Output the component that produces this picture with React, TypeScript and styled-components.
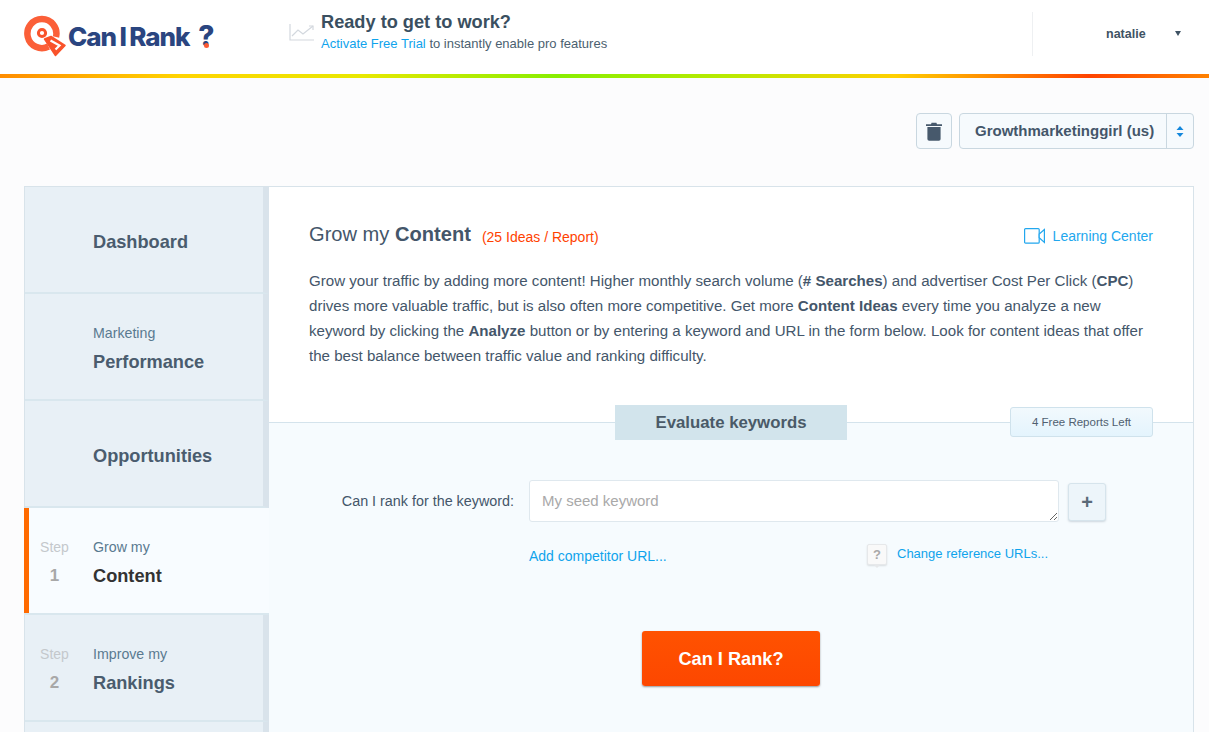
import React from "react";
import styled, { createGlobalStyle } from "styled-components";

const Global = createGlobalStyle`
  html, body { margin: 0; padding: 0; height: 732px; overflow: hidden; background: #fcfcfd; }
  body { font-family: "Liberation Sans", Arial, sans-serif; color: #44566a; }
  * { box-sizing: border-box; }
`;

const Page = styled.div`
  width: 1209px;
  height: 732px;
  overflow: hidden;
`;

const Header = styled.header`
  height: 78px;
  background: #fff;
  border-bottom: 4px solid transparent;
  border-image: linear-gradient(90deg, #ff8c00 0%, #ffd400 15%, #e8e800 30%, #88ee00 46%, #b8ea00 60%, #ffd000 74%, #ff4300 90%, #ff8200 100%) 1;
  display: flex;
  align-items: flex-start;
`;

const Logo = styled.div`
  width: 289px;
  padding: 15px 0 0 24px;
  display: flex;
  align-items: flex-start;
`;

const LogoText = styled.span`
  font-family: Inter, "Liberation Sans", sans-serif;
  font-weight: 800;
  font-size: 26px;
  letter-spacing: -1.1px;
  word-spacing: -1px;
  line-height: 40px;
  color: #2a4580;
  white-space: nowrap;
  margin: 2px 0 0 1px;
`;

const LogoMark = styled.span`
  position: relative;
  display: inline-block;
  font-size: 28px;
  line-height: 38px;
  vertical-align: top;
  margin-left: 9px;
  &::after {
    content: "";
    position: absolute;
    left: 5.5px;
    bottom: 7px;
    width: 5px;
    height: 5px;
    border-radius: 50%;
    background: #fb5a33;
  }
`;

const Promo = styled.div`
  flex: 1;
  display: flex;
  padding-top: 12px;
`;

const PromoIcon = styled.div`
  width: 32px;
  padding-top: 11px;
`;

const PromoTitle = styled.div`
  font-size: 18.2px;
  line-height: 20px;
  font-weight: 700;
  color: #3a4f60;
`;

const PromoLine = styled.div`
  margin-top: 4px;
  font-size: 13px;
  line-height: 15px;
  color: #4b5f70;
`;

const Link = styled.a`
  color: #0fa3ec;
`;

const UserArea = styled.div`
  width: 177px;
  margin-top: 12px;
  height: 44px;
  border-left: 1px solid #eef0f2;
  display: flex;
  align-items: center;
  padding-left: 73px;
  font-size: 12.5px;
  font-weight: 700;
  color: #3f5364;
`;

const Caret = styled.span`
  margin-left: 29px;
  width: 0;
  height: 0;
  border-left: 3.5px solid transparent;
  border-right: 3.5px solid transparent;
  border-top: 5px solid #3f5364;
  margin-top: -1px;
`;

const Toolbar = styled.div`
  height: 108px;
  padding: 35px 15px 0 0;
  display: flex;
  justify-content: flex-end;
  gap: 7px;
`;

const IconButton = styled.div`
  width: 36px;
  height: 36px;
  border: 1px solid #c9d7e0;
  border-radius: 4px;
  background: #f6fafd;
  display: flex;
  align-items: center;
  justify-content: center;
`;

const Select = styled.div`
  width: 235px;
  height: 36px;
  border: 1px solid #c9d7e0;
  border-radius: 4px;
  background: #f6fafd;
  display: flex;
`;

const SelectLabel = styled.div`
  flex: 1;
  padding-left: 15px;
  line-height: 34px;
  font-size: 15px;
  font-weight: 700;
  color: #44566a;
  white-space: nowrap;
`;

const SelectArrows = styled.div`
  width: 27px;
  border-left: 1px solid #c9d7e0;
  display: flex;
  align-items: center;
  justify-content: center;
`;

const Panel = styled.div`
  margin: 0 15px 0 24px;
  height: 560px;
  border: 1px solid #d8e3ea;
  background: #fff;
  display: flex;
`;

const Sidebar = styled.nav`
  width: 244px;
  flex: none;
`;

const NavItem = styled.div<{ $active?: boolean }>`
  height: 107px;
  display: flex;
  align-items: center;
  background: ${p => (p.$active ? "#f8fcff" : "#e8f0f6")};
  border-bottom: 2px solid #d9e7ee;
  border-right: ${p => (p.$active ? "0" : "6px solid #d9e3eb")};
  box-shadow: ${p => (p.$active ? "inset 5px 0 0 #ff6a00" : "none")};
  margin-left: ${p => (p.$active ? "-1px" : "0")};
  padding: 2px 0 0 ${p => (p.$active ? "16px" : "15px")};
`;

const StepCol = styled.div`
  width: 53px;
  text-align: center;
  padding-right: 24px;
  flex: none;
`;

const StepLabel = styled.div`
  font-size: 14px;
  line-height: 20px;
  color: #c4c8cc;
`;

const StepNum = styled.div`
  font-size: 17px;
  line-height: 20px;
  font-weight: 700;
  color: #a8a8a8;
  margin-top: 9px;
`;

const NavText = styled.div``;

const NavSub = styled.div`
  font-size: 14.2px;
  line-height: 20px;
  color: #5a7a90;
`;

const NavMain = styled.div<{ $active?: boolean; $top?: boolean }>`
  font-size: 18.2px;
  line-height: 20px;
  font-weight: 700;
  color: ${p => (p.$active ? "#333333" : "#4a5c6e")};
  margin-top: ${p => (p.$top ? "2px" : "9px")};
`;

const Main = styled.main`
  flex: 1;
  min-width: 0;
  display: flex;
  flex-direction: column;
`;

const Intro = styled.section`
  height: 235px;
  padding: 35px 40px 0;
`;

const TitleRow = styled.div`
  display: flex;
  align-items: center;
  height: 24px;
`;

const Title = styled.h1`
  margin: 0;
  font-size: 20.1px;
  font-weight: 400;
  color: #44566a;
  b { font-weight: 700; }
`;

const TitleNote = styled.span`
  margin-left: 11px;
  font-size: 14px;
  color: #ff4200;
  padding-top: 5px;
`;

const Learning = styled.a`
  margin-left: auto;
  display: flex;
  align-items: center;
  gap: 8px;
  font-size: 14px;
  color: #22a7ee;
  padding-top: 4px;
`;

const Body = styled.p`
  margin: 22px 0 0;
  font-size: 15.1px;
  line-height: 25px;
  color: #44566a;
  width: 844px;
`;

const Evaluate = styled.section`
  flex: 1;
  position: relative;
  border-top: 1px solid #d4e3ec;
  background: #f6fbfe;
  display: flex;
  flex-direction: column;
`;

const EvalTab = styled.div`
  position: absolute;
  top: -18px;
  left: 346px;
  width: 232px;
  height: 35px;
  background: #d2e4ec;
  text-align: center;
  line-height: 35px;
  font-size: 16.8px;
  font-weight: 700;
  color: #4a5a68;
`;

const ReportsBadge = styled.div`
  position: absolute;
  top: -16px;
  right: 40px;
  width: 143px;
  height: 30px;
  border: 1px solid #cfe2ec;
  border-radius: 3px;
  background: linear-gradient(#f2f9fd, #e4f4fd);
  text-align: center;
  line-height: 28px;
  font-size: 11.5px;
  color: #4f6070;
`;

const FormRow = styled.div`
  margin-top: 57px;
  display: flex;
  align-items: flex-start;
`;

const FieldLabel = styled.label`
  width: 245px;
  text-align: right;
  font-size: 14.35px;
  line-height: 42px;
  color: #44566a;
`;

const Keyword = styled.textarea`
  margin-left: 15px;
  width: 530px;
  height: 42px;
  border: 1px solid #dfe8ee;
  border-radius: 3px;
  background: #fff;
  padding: 11px 12px;
  font-family: "Liberation Sans", Arial, sans-serif;
  font-size: 15px;
  line-height: 17px;
  outline: none;
  &::placeholder { color: #a9a9a9; opacity: 1; }
`;

const PlusButton = styled.div`
  margin: 3px 0 0 9px;
  width: 38px;
  height: 38px;
  border: 1px solid #d6e4ec;
  border-radius: 3px;
  background: #edf5fa;
  box-shadow: 0 1px 2px rgba(90, 110, 130, 0.25);
  display: flex;
  align-items: center;
  justify-content: center;
  font-size: 20px;
  font-weight: 700;
  color: #5a6a78;
`;

const LinkRow = styled.div`
  margin-top: 22px;
  padding-left: 260px;
  display: flex;
  align-items: flex-start;
`;

const CompetitorLink = styled(Link)`
  width: 338px;
  font-size: 14px;
  line-height: 24px;
`;

const HelpBubble = styled.div`
  position: relative;
  width: 20px;
  height: 21px;
  background: #f9f9f9;
  border: 1px solid #e6e8ea;
  border-radius: 2px;
  box-shadow: 0 1px 2px rgba(0, 0, 0, 0.12);
  text-align: center;
  font-size: 13px;
  line-height: 19px;
  font-weight: 700;
  color: #a8a8a8;
  &::after {
    content: "";
    position: absolute;
    left: 6px;
    bottom: -4px;
    border-left: 3px solid transparent;
    border-right: 3px solid transparent;
    border-top: 3px solid #e6e8ea;
  }
`;

const ReferenceLink = styled(Link)`
  margin-left: 10px;
  font-size: 13px;
  line-height: 20px;
`;

const SubmitRow = styled.div`
  margin-top: 63px;
  display: flex;
  justify-content: center;
`;

const Submit = styled.button`
  width: 178px;
  height: 55px;
  border: 0;
  border-radius: 3px;
  padding: 2px 0 0;
  background: linear-gradient(#ff5200, #fd4700);
  box-shadow: 0 1px 2px rgba(70, 70, 70, 0.55);
  color: #fff;
  font-family: "Liberation Sans", Arial, sans-serif;
  font-size: 18.2px;
  font-weight: 700;
`;

const LogoIcon = () => (
  <svg width="43" height="42" viewBox="0 0 43 42" fill="none">
    <path d="M24.5 31.5 A14.5 14.5 0 1 1 32 22" stroke="#fb5f38" strokeWidth="6.5" fill="none" />
    <circle cx="18" cy="18" r="3.6" stroke="#f9532b" strokeWidth="3" fill="none" />
    <path d="M20.5 24 L27 21.5 L41 30.5 L31.5 40.5 Z" fill="#f9532b" stroke="#f9532b" strokeWidth="1.5" strokeLinejoin="round" />
    <path d="M26.5 25.5 L35.5 30.5 L31.5 34.5" stroke="#fff" strokeWidth="2.2" fill="none" />
  </svg>
);

const ChartIcon = () => (
  <svg width="26" height="18" viewBox="0 0 26 18" fill="none" stroke="#d3d8de" strokeWidth="1.2">
    <path d="M1 1 V17 H25" />
    <path d="M3 13 L9 7 L14 11 L24 3" />
    <path d="M20 3 H24 V7" />
  </svg>
);

const TrashIcon = () => (
  <svg width="16" height="19" viewBox="0 0 16 19" fill="#47596c">
    <path d="M0 2.2 H5 L5.6 .8 H10.4 L11 2.2 H16 V4 H0 Z" />
    <path d="M1.4 5 H14.6 V17 A1.8 1.8 0 0 1 12.8 18.8 H3.2 A1.8 1.8 0 0 1 1.4 17 Z" />
  </svg>
);

const ArrowsIcon = () => (
  <svg width="8" height="11" viewBox="0 0 8 11" fill="#1487dc">
    <path d="M4 0 L7.5 4 H.5 Z" />
    <path d="M.5 7 H7.5 L4 11 Z" />
  </svg>
);

const CameraIcon = () => (
  <svg width="21" height="16" viewBox="0 0 21 16" fill="none" stroke="#22a7ee" strokeWidth="1.2">
    <rect x=".6" y=".6" width="14.6" height="14.6" rx="1" />
    <path d="M20.4 1.5 L15.2 6 V9.8 L20.4 14.4 Z" fill="#fff" />
  </svg>
);

const App = () => (
  <Page>
    <Global />
    <Header>
      <Logo>
        <LogoIcon />
        <LogoText>
          Can I Rank<LogoMark>?</LogoMark>
        </LogoText>
      </Logo>
      <Promo>
        <PromoIcon>
          <ChartIcon />
        </PromoIcon>
        <div>
          <PromoTitle>Ready to get to work?</PromoTitle>
          <PromoLine>
            <Link>Activate Free Trial</Link> to instantly enable pro features
          </PromoLine>
        </div>
      </Promo>
      <UserArea>
        natalie
        <Caret />
      </UserArea>
    </Header>
    <Toolbar>
      <IconButton>
        <TrashIcon />
      </IconButton>
      <Select>
        <SelectLabel>Growthmarketinggirl (us)</SelectLabel>
        <SelectArrows>
          <ArrowsIcon />
        </SelectArrows>
      </Select>
    </Toolbar>
    <Panel>
      <Sidebar>
        <NavItem>
          <StepCol />
          <NavText>
            <NavMain $top>Dashboard</NavMain>
          </NavText>
        </NavItem>
        <NavItem>
          <StepCol />
          <NavText>
            <NavSub>Marketing</NavSub>
            <NavMain>Performance</NavMain>
          </NavText>
        </NavItem>
        <NavItem>
          <StepCol />
          <NavText>
            <NavMain $top>Opportunities</NavMain>
          </NavText>
        </NavItem>
        <NavItem $active>
          <StepCol>
            <StepLabel>Step</StepLabel>
            <StepNum>1</StepNum>
          </StepCol>
          <NavText>
            <NavSub>Grow my</NavSub>
            <NavMain $active>Content</NavMain>
          </NavText>
        </NavItem>
        <NavItem>
          <StepCol>
            <StepLabel>Step</StepLabel>
            <StepNum>2</StepNum>
          </StepCol>
          <NavText>
            <NavSub>Improve my</NavSub>
            <NavMain>Rankings</NavMain>
          </NavText>
        </NavItem>
        <NavItem />
      </Sidebar>
      <Main>
        <Intro>
          <TitleRow>
            <Title>
              Grow my <b>Content</b>
            </Title>
            <TitleNote>(25 Ideas / Report)</TitleNote>
            <Learning>
              <CameraIcon />
              Learning Center
            </Learning>
          </TitleRow>
          <Body>
            Grow your traffic by adding more content! Higher monthly search volume (<b># Searches</b>) and advertiser Cost Per Click (<b>CPC</b>) drives more valuable traffic, but is also often more competitive. Get more <b>Content Ideas</b> every time you analyze a new keyword by clicking the <b>Analyze</b> button or by entering a keyword and URL in the form below. Look for content ideas that offer the best balance between traffic value and ranking difficulty.
          </Body>
        </Intro>
        <Evaluate>
          <EvalTab>Evaluate keywords</EvalTab>
          <ReportsBadge>4 Free Reports Left</ReportsBadge>
          <FormRow>
            <FieldLabel>Can I rank for the keyword:</FieldLabel>
            <Keyword placeholder="My seed keyword" />
            <PlusButton>+</PlusButton>
          </FormRow>
          <LinkRow>
            <CompetitorLink>Add competitor URL...</CompetitorLink>
            <HelpBubble>?</HelpBubble>
            <ReferenceLink>Change reference URLs...</ReferenceLink>
          </LinkRow>
          <SubmitRow>
            <Submit>Can I Rank?</Submit>
          </SubmitRow>
        </Evaluate>
      </Main>
    </Panel>
  </Page>
);

export default App;
